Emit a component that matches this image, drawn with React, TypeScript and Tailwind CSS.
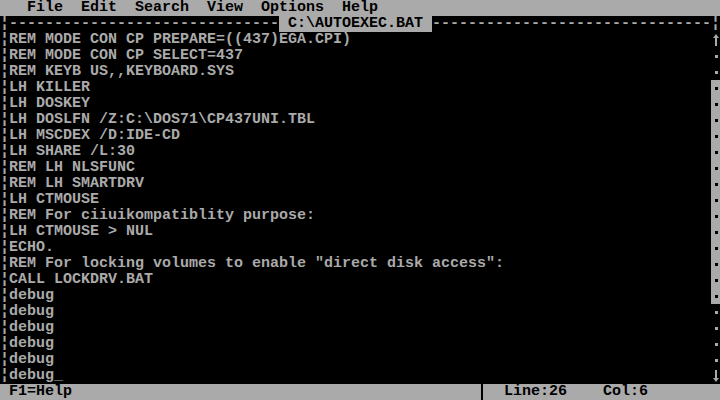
import React from "react";

const lines = [
  "REM MODE CON CP PREPARE=((437)EGA.CPI)",
  "REM MODE CON CP SELECT=437",
  "REM KEYB US,,KEYBOARD.SYS",
  "LH KILLER",
  "LH DOSKEY",
  "LH DOSLFN /Z:C:\\DOS71\\CP437UNI.TBL",
  "LH MSCDEX /D:IDE-CD",
  "LH SHARE /L:30",
  "REM LH NLSFUNC",
  "REM LH SMARTDRV",
  "LH CTMOUSE",
  "REM For ciiuikompatiblity purpose:",
  "LH CTMOUSE > NUL",
  "ECHO.",
  'REM For locking volumes to enable "direct disk access":',
  "CALL LOCKDRV.BAT",
  "debug",
  "debug",
  "debug",
  "debug",
  "debug",
  "debug",
];

function Arrow({ up }: { up?: boolean }) {
  return (
    <svg width="9" height="16" className="block">
      {up ? (
        <g fill="#aaaaaa">
          <rect x="4" y="4" width="2" height="10" />
          <polygon points="5,2 2,6 8,6" />
        </g>
      ) : (
        <g fill="#aaaaaa">
          <rect x="4" y="2" width="2" height="10" />
          <polygon points="5,14 2,10 8,10" />
        </g>
      )}
    </svg>
  );
}

function ScrollCell({ row }: { row: number }) {
  if (row === 0) return <Arrow up />;
  if (row === 21) return <Arrow />;
  const thumb = row >= 3 && row <= 16;
  return (
    <div
      className={`h-4 w-[9px] flex items-center justify-center pl-[1px] ${
        thumb ? "bg-[#aaaaaa]" : ""
      }`}
    >
      <span className={`block w-[3px] h-[3px] ${thumb ? "bg-black" : "bg-[#aaaaaa]"}`} />
    </div>
  );
}

export default function App() {
  return (
    <div className="w-[720px] h-[400px] bg-black flex flex-col overflow-hidden font-['Liberation_Mono',monospace] text-[15px] leading-4 font-bold text-[#aaaaaa]">
      <div className="h-4 bg-[#aaaaaa] text-black whitespace-pre">
        {"   File  Edit  Search  View  Options  Help"}
      </div>
      <div className="h-4 whitespace-pre">
        {"¦" + "-".repeat(30)}
        <span className="bg-[#aaaaaa] text-black">{" C:\\AUTOEXEC.BAT "}</span>
        {"-".repeat(31) + "¦"}
      </div>
      <div className="flex flex-1">
        <div className="w-[711px] flex flex-col">
          {lines.map((l, i) => (
            <div key={i} className="h-4 whitespace-pre">
              {"¦" + l + (i === lines.length - 1 ? "_" : "")}
            </div>
          ))}
        </div>
        <div className="w-[9px] flex flex-col">
          {lines.map((_, i) => (
            <ScrollCell key={i} row={i} />
          ))}
        </div>
      </div>
      <div className="h-4 bg-[#aaaaaa] text-black flex whitespace-pre">
        <span className="w-[477px]">{" F1=Help"}</span>
        <span className="w-[9px] flex justify-center">
          <span className="block w-[2px] h-4 bg-black" />
        </span>
        <span>{"  Line:26    Col:6"}</span>
      </div>
    </div>
  );
}
